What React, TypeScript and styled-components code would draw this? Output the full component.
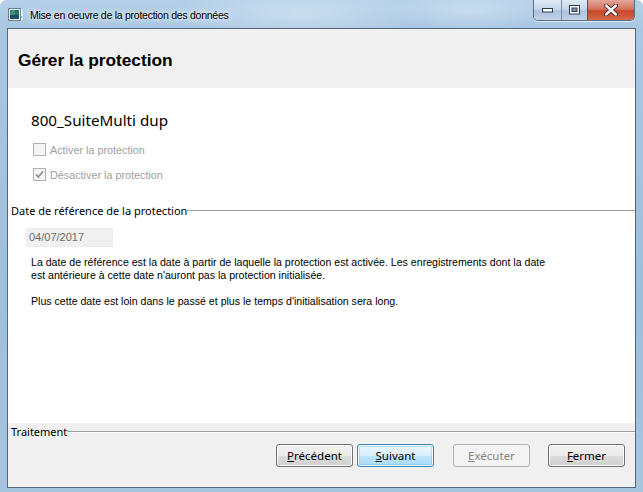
import React from "react";
import styled, { createGlobalStyle } from "styled-components";

const Global = createGlobalStyle`
  html, body { margin: 0; padding: 0; }
  body { width: 643px; height: 492px; overflow: hidden; font-family: "Liberation Sans", Arial, sans-serif; }
`;

const Frame = styled.div`
  width: 643px;
  height: 492px;
  box-sizing: border-box;
  display: flex;
  flex-direction: column;
  padding: 0 7px 4px 7px;
  background:
    radial-gradient(ellipse 180px 40px at 300px 14px, rgba(255,255,255,0.35), rgba(255,255,255,0) 70%),
    radial-gradient(ellipse 120px 30px at 470px 10px, rgba(255,255,255,0.3), rgba(255,255,255,0) 70%),
    linear-gradient(to bottom, #b4d0e9 0px, #a9c7e2 30px, #9ebfdc 300px, #a6c4de 492px);
  border-radius: 6px 6px 0 0;
`;

const TitleBar = styled.div`
  height: 28px;
  display: flex;
  align-items: flex-start;
  justify-content: space-between;
`;

const TitleLeft = styled.div`
  display: flex;
  align-items: center;
  gap: 7px;
  padding: 8px 0 0 1px;
`;

const TitleText = styled.span`
  font-family: "Liberation Sans", Arial, sans-serif;
  font-size: 10.6px;
  letter-spacing: -0.3px;
  color: #000;
  line-height: 14px;
  text-shadow: 0 0 8px rgba(255,255,255,0.9), 0 0 4px rgba(255,255,255,0.9);
`;

const Caption = styled.div`
  display: flex;
  height: 20px;
  margin-right: 1px;
  border: 1px solid #5a7089;
  border-top: none;
  border-radius: 0 0 5px 5px;
  overflow: hidden;
  box-shadow: 0 1px 0 rgba(255,255,255,0.6);
`;

const CapBtn = styled.div<{ $w: number; $close?: boolean }>`
  width: ${(p) => p.$w}px;
  height: 100%;
  display: flex;
  align-items: center;
  justify-content: center;
  box-sizing: border-box;
  border-left: ${(p) => (p.$close ? "1px solid #6b4a48" : "1px solid #7d93ab")};
  &:first-child { border-left: none; }
  background: ${(p) =>
    p.$close
      ? "linear-gradient(to bottom, #e4a69a 0%, #d5725f 45%, #c8452b 55%, #d36a4a 100%)"
      : "linear-gradient(to bottom, #dfe9f4 0%, #c6d7ea 45%, #adc3dd 55%, #bfd2e7 100%)"};
`;

const Client = styled.div`
  flex: 1;
  display: flex;
  flex-direction: column;
  border: 1px solid #55677a;
  background: #fff;
  min-height: 0;
`;

const Header = styled.div`
  height: 59px;
  box-sizing: border-box;
  background: #f0f0f0;
  display: flex;
  align-items: center;
  padding: 3px 0 0 10px;
`;

const HeaderTitle = styled.h1`
  margin: 0;
  font-family: "Liberation Sans", Arial, sans-serif;
  font-weight: bold;
  font-size: 17.3px;
  color: #000;
`;

const Body = styled.div`
  flex: 1;
  display: flex;
  flex-direction: column;
  background: #fff;
`;

const Subject = styled.div`
  margin: 22px 0 0 23px;
  font-family: "Noto Sans", "Liberation Sans", sans-serif;
  font-size: 15.2px;
  line-height: 20px;
  color: #000;
`;

const CheckRow = styled.label<{ $top: number }>`
  display: flex;
  align-items: center;
  gap: 4px;
  margin: ${(p) => p.$top}px 0 0 25px;
  height: 13px;
  font-family: "Liberation Sans", Arial, sans-serif;
  font-size: 10.8px;
  color: #a0a0a0;
`;

const Box = styled.span`
  width: 13px;
  height: 13px;
  box-sizing: border-box;
  border: 1px solid #b1b1b1;
  background: #f4f4f4;
  display: flex;
  align-items: center;
  justify-content: center;
`;

const Group = styled.div<{ $top: number }>`
  display: flex;
  align-items: center;
  margin: ${(p) => p.$top}px 0 0 3px;
  gap: 0;
`;

const GroupLabel = styled.span`
  font-family: "Noto Sans", "Liberation Sans", sans-serif;
  font-size: 11px;
  color: #000;
  line-height: 14px;
`;

const GroupLine = styled.span`
  flex: 1;
  height: 1px;
  background: #a0a0a0;
  border-bottom: 1px solid #fff;
`;

const DateField = styled.div`
  margin: 10px 0 0 18px;
  width: 87px;
  height: 19px;
  box-sizing: border-box;
  background: #f0f0f0;
  border: 1px solid #ececec;
  font-family: "Liberation Sans", Arial, sans-serif;
  font-size: 11px;
  line-height: 17px;
  padding-left: 2px;
  color: #6d6d6d;
`;

const Para = styled.p`
  margin: 9px 0 0 23px;
  font-family: "Liberation Sans", Arial, sans-serif;
  font-size: 10.6px;
  line-height: 13px;
  color: #000;
  white-space: pre-line;
`;

const Footer = styled.div`
  height: 64px;
  background: #f0f0f0;
  display: flex;
  flex-direction: column;
`;

const Buttons = styled.div`
  display: flex;
  justify-content: flex-end;
  margin: 5px 10px 0 0;
`;

const Btn = styled.button<{ $kind?: "default" | "disabled"; $ml: number }>`
  width: 77px;
  height: 23px;
  margin-left: ${(p) => p.$ml}px;
  padding: 0;
  border-radius: 3px;
  font-family: "Noto Sans", "Liberation Sans", sans-serif;
  font-size: 11.5px;
  color: ${(p) => (p.$kind === "disabled" ? "#838383" : "#000")};
  border: 1px solid
    ${(p) => (p.$kind === "default" ? "#3c7fb1" : p.$kind === "disabled" ? "#adb2b5" : "#707070")};
  background: ${(p) =>
    p.$kind === "disabled"
      ? "#f4f4f4"
      : p.$kind === "default"
      ? "linear-gradient(to bottom, #eaf6fd 0%, #d9f0fc 50%, #bee6fd 51%, #a7d9f5 100%)"
      : "linear-gradient(to bottom, #f2f2f2 0%, #ebebeb 50%, #dddddd 51%, #cfcfcf 100%)"};
  box-shadow: ${(p) =>
    p.$kind === "disabled"
      ? "none"
      : p.$kind === "default"
      ? "inset 0 0 0 1px #f0f9ff, inset 0 0 0 2px rgba(90,190,240,0.35)"
      : "inset 0 0 0 1px rgba(255,255,255,0.8)"};
  & u { text-underline-offset: 1px; }
`;

const WinIcon = () => (
  <svg width="15" height="14" viewBox="0 0 15 14">
    <rect x="0.5" y="0.5" width="12" height="12" fill="#e8eef4" stroke="#6f7f8f" />
    <rect x="2" y="2" width="9" height="9" fill="#2f6f6a" />
    <rect x="2" y="2" width="5" height="9" fill="#3f8f7a" />
    <rect x="2" y="7" width="9" height="4" fill="#1e4f66" />
    <rect x="13" y="1" width="1.4" height="7" fill="#fff" />
    <rect x="13" y="10" width="1.4" height="1.6" fill="#fff" />
  </svg>
);

const Check = () => (
  <svg width="9" height="9" viewBox="0 0 9 9">
    <path d="M1 4.5 L3.3 7 L8 1.5" fill="none" stroke="#8d8d8d" strokeWidth="1.8" />
  </svg>
);

export default function App() {
  return (
    <>
      <Global />
      <Frame>
        <TitleBar>
          <TitleLeft>
            <WinIcon />
            <TitleText>Mise en oeuvre de la protection des données</TitleText>
          </TitleLeft>
          <Caption>
            <CapBtn $w={27}>
              <svg width="11" height="5" viewBox="0 0 11 5">
                <rect x="0.5" y="0.5" width="10" height="3.5" fill="#fff" stroke="#2b3c52" />
              </svg>
            </CapBtn>
            <CapBtn $w={26}>
              <svg width="11" height="10" viewBox="0 0 11 10">
                <rect x="0.5" y="0.5" width="10" height="8.5" fill="#fff" stroke="#2b3c52" />
                <rect x="3" y="3" width="5" height="3.5" fill="#7f93ab" stroke="#2b3c52" strokeWidth="1" />
              </svg>
            </CapBtn>
            <CapBtn $w={47} $close>
              <svg width="14" height="12" viewBox="0 0 14 12">
                <path d="M2 1.5 L12 10.5 M12 1.5 L2 10.5" stroke="#3b2020" strokeWidth="4.2" strokeLinecap="round" />
                <path d="M2 1.5 L12 10.5 M12 1.5 L2 10.5" stroke="#fff" strokeWidth="2.4" strokeLinecap="round" />
              </svg>
            </CapBtn>
          </Caption>
        </TitleBar>
        <Client>
          <Header>
            <HeaderTitle>Gérer la protection</HeaderTitle>
          </Header>
          <Body>
            <Subject>800_SuiteMulti dup</Subject>
            <CheckRow $top={13}>
              <Box />
              Activer la protection
            </CheckRow>
            <CheckRow $top={12}>
              <Box>
                <Check />
              </Box>
              Désactiver la protection
            </CheckRow>
            <Group $top={23}>
              <GroupLabel>Date de référence de la protection</GroupLabel>
              <GroupLine />
            </Group>
            <DateField>04/07/2017</DateField>
            <Para>
              {"La date de référence est la date à partir de laquelle la protection est activée. Les enregistrements dont la date\nest antérieure à cette date n'auront pas la protection initialisée.\n\nPlus cette date est loin dans le passé et plus le temps d'initialisation sera long."}
            </Para>
          </Body>
          <Footer>
            <Group $top={2}>
              <GroupLabel>Traitement</GroupLabel>
              <GroupLine />
            </Group>
            <Buttons>
              <Btn $ml={0}>
                <u>P</u>récédent
              </Btn>
              <Btn $ml={4} $kind="default">
                <u>S</u>uivant
              </Btn>
              <Btn $ml={19} $kind="disabled">
                <u>E</u>xécuter
              </Btn>
              <Btn $ml={18}>
                <u>F</u>ermer
              </Btn>
            </Buttons>
          </Footer>
        </Client>
      </Frame>
    </>
  );
}
